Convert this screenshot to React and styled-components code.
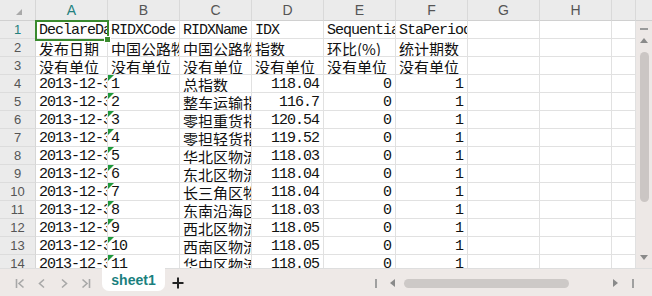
import React from 'react';
import styled, { createGlobalStyle } from 'styled-components';

const GlobalStyle = createGlobalStyle`
  html, body {
    margin: 0;
    padding: 0;
    background: #fff;
  }
`;

const Window = styled.div`
  width: 652px;
  height: 296px;
  display: flex;
  flex-direction: column;
  overflow: hidden;
  background: #fff;
`;

const Body = styled.div`
  display: flex;
  height: 268px;
`;

const Grid = styled.div`
  position: relative;
  flex: 1;
  display: grid;
  grid-template-columns: 36px repeat(8, 72px) 1fr;
  grid-template-rows: 21px;
  grid-auto-rows: 18px;
  height: 268px;
  overflow: hidden;
`;

const Corner = styled.div`
  position: relative;
  background: #ebebeb;
  border-right: 1px solid #d6d6d6;
  border-bottom: 1px solid #d0d0d0;
  box-sizing: border-box;

  &::after {
    content: '';
    position: absolute;
    right: 13px;
    bottom: 5px;
    width: 0;
    height: 0;
    border-left: 6px solid transparent;
    border-bottom: 6px solid #a9a9a9;
  }
`;

const ColHead = styled.div`
  background: #ebebeb;
  border-right: 1px solid #d9d9d9;
  border-bottom: 1px solid #d0d0d0;
  box-sizing: border-box;
  display: flex;
  align-items: center;
  justify-content: center;
  font-family: "Liberation Sans", Arial, sans-serif;
  font-size: 14px;
  color: ${p => (p.$active ? '#23807d' : '#555')};
`;

const RowHead = styled.div`
  background: #ebebeb;
  border-right: 1px solid #d6d6d6;
  border-bottom: 1px solid #dcdcdc;
  box-sizing: border-box;
  display: flex;
  align-items: center;
  justify-content: center;
  font-family: "Liberation Sans", Arial, sans-serif;
  font-size: 13px;
  color: ${p => (p.$active ? '#23807d' : '#555')};
`;

const Cell = styled.div`
  position: relative;
  box-sizing: border-box;
  border-right: 1px solid #e1e1e1;
  border-bottom: 1px solid #e1e1e1;
  padding: ${p => (p.$align === 'right' ? '1px 4px 0 2px' : '1px 2px 0 3px')};
  text-align: ${p => p.$align || 'left'};
  font-family: ${p =>
    p.$cjk ? '"Noto Sans CJK SC", sans-serif' : '"Liberation Mono", "Courier New", monospace'};
  font-size: 15px;
  letter-spacing: ${p => (p.$cjk ? '0' : '-1px')};
  line-height: 17px;
  white-space: nowrap;
  overflow: hidden;
  color: #111;

  ${p =>
    p.$flag &&
    `
    &::before {
      content: '';
      position: absolute;
      top: 0;
      left: 0;
      border-top: 6px solid #1f9a3c;
      border-right: 6px solid transparent;
    }
  `}
`;

const Selection = styled.div`
  position: absolute;
  z-index: 2;
  left: 35px;
  top: 20px;
  width: 74px;
  height: 21px;
  box-sizing: border-box;
  border: 2px solid #3a8a2e;
  pointer-events: none;

  &::after {
    content: '';
    position: absolute;
    right: -4px;
    bottom: -4px;
    width: 5px;
    height: 5px;
    background: #3a8a2e;
    border: 1px solid #fff;
  }
`;

const VScroll = styled.div`
  width: 16px;
  display: flex;
  flex-direction: column;
`;

const VHeadFill = styled.div`
  height: 21px;
  box-sizing: border-box;
  background: #ebebeb;
  border-bottom: 1px solid #d0d0d0;
`;

const VTrack = styled.div`
  flex: 1;
  background: #ede8e6;
  display: flex;
  flex-direction: column;
  align-items: center;
  padding-top: 7px;
  padding-bottom: 8px;
`;

const Dash = styled.div`
  width: 8px;
  height: 2px;
  background: #9a9a9a;
`;

const VThumb = styled.div`
  width: 9px;
  height: 150px;
  margin-top: 9px;
  border-radius: 5px;
  background: #cbc6c4;
`;

const Tri = styled.div`
  width: 0;
  height: 0;
  ${p =>
    p.$dir === 'up' &&
    `border-left: 4px solid transparent; border-right: 4px solid transparent; border-bottom: 5px solid #8a8a8a;`}
  ${p =>
    p.$dir === 'down' &&
    `border-left: 4px solid transparent; border-right: 4px solid transparent; border-top: 5px solid #8a8a8a;`}
  ${p =>
    p.$dir === 'left' &&
    `border-top: 4px solid transparent; border-bottom: 4px solid transparent; border-right: 5px solid #8a8a8a;`}
  ${p =>
    p.$dir === 'right' &&
    `border-top: 4px solid transparent; border-bottom: 4px solid transparent; border-left: 5px solid #8a8a8a;`}
  margin-top: ${p => p.$mt || 0}px;
  margin-left: ${p => p.$ml || 0}px;
`;

const Spring = styled.div`
  flex: 1;
`;

const BottomBar = styled.div`
  height: 28px;
  box-sizing: border-box;
  border-top: 1px solid #dedede;
  background: #eee9e7;
  display: flex;
  align-items: flex-start;
`;

const Nav = styled.div`
  width: 102px;
  height: 28px;
  display: flex;
  align-items: center;
  padding-left: 15px;
  box-sizing: border-box;
  gap: 12px;
`;

const NavIcon = styled.svg`
  width: 10px;
  height: 11px;
  flex: none;
`;

const Tab = styled.div`
  width: 63px;
  height: 23px;
  margin-top: -1px;
  padding-top: 1px;
  box-sizing: border-box;
  background: #fff;
  border-radius: 0 0 7px 7px;
  display: flex;
  align-items: center;
  justify-content: center;
  font-family: "Liberation Sans", Arial, sans-serif;
  font-weight: bold;
  font-size: 14px;
  color: #1a7f7e;
`;

const AddButton = styled.div`
  width: 26px;
  height: 28px;
  display: flex;
  align-items: center;
  justify-content: center;
`;

const HScroll = styled.div`
  margin-left: auto;
  height: 28px;
  display: flex;
  align-items: center;
  padding-right: 18px;
`;

const Bar = styled.div`
  width: 2px;
  height: 9px;
  background: #a0a0a0;
  margin-left: ${p => p.$ml || 0}px;
`;

const HThumb = styled.div`
  width: 165px;
  height: 9px;
  border-radius: 5px;
  background: #cdc9c7;
  margin-left: 9px;
`;

const headers = ['A', 'B', 'C', 'D', 'E', 'F', 'G', 'H', ''];

const names = [
  '总指数',
  '整车运输指数',
  '零担重货指数',
  '零担轻货指数',
  '华北区物流指数',
  '东北区物流指数',
  '长三角区物流指数',
  '东南沿海区物流指数',
  '西北区物流指数',
  '西南区物流指数',
  '华中区物流指数',
];

const idx = ['118.04', '116.7', '120.54', '119.52', '118.03', '118.04', '118.04', '118.03', '118.05', '118.05', '118.05'];

const rows = [
  [
    { v: 'DeclareDate' },
    { v: 'RIDXCode' },
    { v: 'RIDXName' },
    { v: 'IDX' },
    { v: 'SequentialGrowth' },
    { v: 'StaPeriod' },
  ],
  [
    { v: '发布日期', cjk: true },
    { v: '中国公路物流运价指数', cjk: true },
    { v: '中国公路物流运价指数', cjk: true },
    { v: '指数', cjk: true },
    { v: '环比(%)', cjk: true },
    { v: '统计期数', cjk: true },
  ],
  Array.from({ length: 6 }, () => ({ v: '没有单位', cjk: true })),
  ...names.map((n, i) => [
    { v: '2013-12-31' },
    { v: String(i + 1), flag: true },
    { v: n, cjk: true },
    { v: idx[i], align: 'right' },
    { v: '0', align: 'right' },
    { v: '1', align: 'right' },
  ]),
];

const First = () => (
  <NavIcon viewBox="0 0 10 11">
    <path d="M1.5 1v9M8.5 1.5L4 5.5l4.5 4" stroke="#a8a8a8" strokeWidth="1.6" fill="none" />
  </NavIcon>
);
const Prev = () => (
  <NavIcon viewBox="0 0 10 11">
    <path d="M7 1.5L2.5 5.5 7 9.5" stroke="#a8a8a8" strokeWidth="1.6" fill="none" />
  </NavIcon>
);
const Next = () => (
  <NavIcon viewBox="0 0 10 11">
    <path d="M3 1.5l4.5 4L3 9.5" stroke="#a8a8a8" strokeWidth="1.6" fill="none" />
  </NavIcon>
);
const Last = () => (
  <NavIcon viewBox="0 0 10 11">
    <path d="M1.5 1.5L6 5.5l-4.5 4M8.5 1v9" stroke="#a8a8a8" strokeWidth="1.6" fill="none" />
  </NavIcon>
);

const App = () => (
  <Window>
    <GlobalStyle />
    <Body>
      <Grid>
        <Corner />
        {headers.map((h, i) => (
          <ColHead key={i} $active={h === 'A'}>
            {h}
          </ColHead>
        ))}
        {rows.map((row, r) => (
          <React.Fragment key={r}>
            <RowHead $active={r === 0}>{r + 1}</RowHead>
            {headers.map((_, c) => {
              const cell = row[c];
              return cell ? (
                <Cell key={c} $cjk={cell.cjk} $align={cell.align} $flag={cell.flag}>
                  {cell.v}
                </Cell>
              ) : (
                <Cell key={c} />
              );
            })}
          </React.Fragment>
        ))}
        <Selection />
      </Grid>
      <VScroll>
        <VHeadFill />
        <VTrack>
          <Dash />
          <Tri $dir="up" $mt={8} />
          <VThumb />
          <Spring />
          <Tri $dir="down" />
        </VTrack>
      </VScroll>
    </Body>
    <BottomBar>
      <Nav>
        <First />
        <Prev />
        <Next />
        <Last />
      </Nav>
      <Tab>sheet1</Tab>
      <AddButton>
        <svg width="12" height="12" viewBox="0 0 12 12">
          <path d="M6 0.5v11M0.5 6h11" stroke="#222" strokeWidth="2" />
        </svg>
      </AddButton>
      <HScroll>
        <Bar />
        <Tri $dir="left" $ml={13} />
        <HThumb />
        <Tri $dir="right" $ml={44} />
        <Bar $ml={14} />
      </HScroll>
    </BottomBar>
  </Window>
);

export default App;
